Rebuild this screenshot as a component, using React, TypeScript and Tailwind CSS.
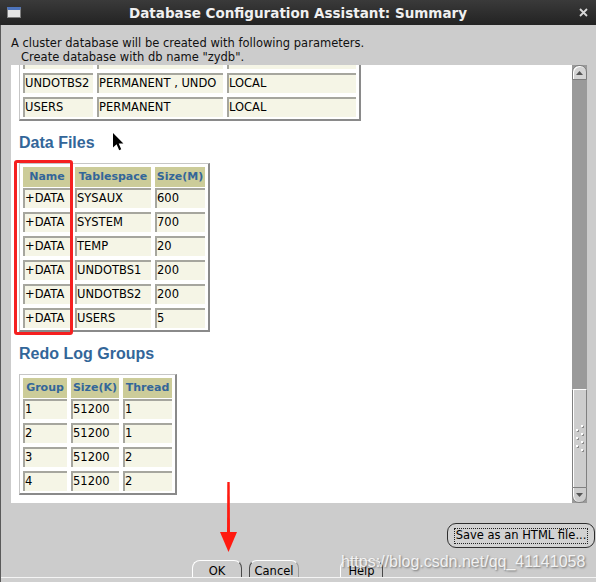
import React from 'react';

type Col = { w: string; label: string };

const tablespaceCols: Col[] = [
  { w: 'w-[70px]', label: 'Name' },
  { w: 'w-[126px]', label: 'Type' },
  { w: 'w-[129px]', label: 'Extent Management' },
];

// only the rows left in view at this scroll position
const tablespaceRows = [
  ['UNDOTBS2', 'PERMANENT , UNDO', 'LOCAL'],
  ['USERS', 'PERMANENT', 'LOCAL'],
];

const fileCols: Col[] = [
  { w: 'w-[48px]', label: 'Name' },
  { w: 'w-[76px]', label: 'Tablespace' },
  { w: 'w-[50px]', label: 'Size(M)' },
];

const fileRows = [
  ['+DATA', 'SYSAUX', '600'],
  ['+DATA', 'SYSTEM', '700'],
  ['+DATA', 'TEMP', '20'],
  ['+DATA', 'UNDOTBS1', '200'],
  ['+DATA', 'UNDOTBS2', '200'],
  ['+DATA', 'USERS', '5'],
];

const redoCols: Col[] = [
  { w: 'w-[44px]', label: 'Group' },
  { w: 'w-[48px]', label: 'Size(K)' },
  { w: 'w-[49px]', label: 'Thread' },
];

const redoRows = [
  ['1', '51200', '1'],
  ['2', '51200', '1'],
  ['3', '51200', '2'],
  ['4', '51200', '2'],
];

function Grid({ cols, rows, scrolled }: { cols: Col[]; rows: string[][]; scrolled?: boolean }) {
  return (
    <div
      className={`inline-flex flex-col border-l border-r-2 border-b-2 border-t-[#c6c6c6] border-l-[#c6c6c6] border-r-[#8a8a8a] border-b-[#8a8a8a] bg-white pl-[3px] pr-[3px] pb-[2px] ${
        scrolled ? 'border-t-0 pt-0' : 'border-t pt-[3px]'
      }`}
    >
      {scrolled ? (
        // bottom edge of the row scrolled out of view
        <div className="mb-[4px] flex gap-[4px]">
          {cols.map((c) => (
            <div key={c.label} className={`${c.w} h-[4px] border-l-2 border-[#a6a69e] bg-[#f5f5e6]`} />
          ))}
        </div>
      ) : (
        <div className="mb-[1px] flex gap-[4px]">
          {cols.map((c) => (
            <div
              key={c.label}
              className={`${c.w} flex h-[20px] items-center justify-center overflow-hidden whitespace-nowrap bg-[#cccc99] pt-[1px] text-[11px] font-bold text-[#336699]`}
            >
              {c.label}
            </div>
          ))}
        </div>
      )}
      <div className="flex flex-col gap-[4px]">
        {rows.map((r, i) => (
          <div key={i} className="flex gap-[4px]">
            {r.map((v, j) => (
              <div
                key={j}
                className={`${cols[j].w} flex h-[20px] items-center overflow-hidden whitespace-nowrap border-t-2 border-l-2 border-[#a6a69e] bg-[#f5f5e6] text-[11.5px] text-black`}
              >
                {v}
              </div>
            ))}
          </div>
        ))}
      </div>
    </div>
  );
}

function Heading({ children }: { children: React.ReactNode }) {
  return (
    <h3 className="h-[18px] font-['Liberation_Sans',Arial,sans-serif] text-[16px] leading-[18px] font-bold text-[#336699]">
      {children}
    </h3>
  );
}

function Scrollbar() {
  return (
    <div className="flex w-[15px] flex-col bg-[#9a9a9a]">
      <div className="flex h-[15px] items-center justify-center rounded-t-[7px] border border-[#7c7c7c] bg-[#d4d4d4] shadow-[inset_1px_1px_0_#ffffff]">
        <svg width="7" height="4" viewBox="0 0 7 4">
          <path d="M3.5 0L7 4H0z" fill="#555" />
        </svg>
      </div>
      <div className="flex-1" />
      {/* thumb */}
      <div className="flex h-[98px] items-center justify-center border border-b-0 border-[#808080] border-t-white bg-[#cdcdcd] shadow-[inset_1px_0_0_#ffffff]">
        <svg width="9" height="28" viewBox="0 0 9 28">
          {[
            [6, 0],
            [1, 4],
            [6, 8],
            [1, 12],
            [6, 16],
            [1, 20],
            [6, 24],
          ].map(([x, y], i) => (
            <g key={i}>
              <rect x={x + 1} y={y + 1} width="2" height="2" fill="#8c8c8c" />
              <rect x={x} y={y} width="2" height="2" fill="#ffffff" />
            </g>
          ))}
        </svg>
      </div>
      <div className="flex h-[16px] items-center justify-center rounded-b-[7px] border border-[#808080] bg-[#cdcdcd] shadow-[inset_1px_0_0_#ffffff]">
        <svg width="7" height="4" viewBox="0 0 7 4">
          <path d="M0 0H7L3.5 4z" fill="#555" />
        </svg>
      </div>
    </div>
  );
}

export default function App() {
  return (
    <div className="relative flex h-[582px] w-[596px] flex-col overflow-hidden bg-[#cccccc] font-['DejaVu_Sans',sans-serif] text-black">
      {/* title bar */}
      <div className="grid h-[25px] grid-cols-[1fr_auto_1fr] items-center bg-gradient-to-b from-[#3a3a3a] to-[#232323]">
        <div className="ml-[7px] h-[11px] w-[14px] border border-t-[3px] border-[#808080] border-t-[#4d74bd] bg-[#e6e6e6]" />
        <div className="text-[13.5px] leading-[18px] font-bold text-[#f0f0f0]">Database Configuration Assistant: Summary</div>
        <div className="mr-[8px] flex justify-end">
          <svg width="9" height="9" viewBox="0 0 9 9">
            <path d="M1 1L8 8M8 1L1 8" stroke="#d8d8d8" strokeWidth="1.8" />
          </svg>
        </div>
      </div>

      <div className="flex flex-1 flex-col border-l border-[#5a5a5a]">
        <div className="pt-[11px] text-[11.5px] leading-[14px] text-[#111]">
          <p className="pl-[10px]">A cluster database will be created with following parameters.</p>
          <p className="pl-[20px]">Create database with db name "zydb".</p>
        </div>

        <div className="mt-[1px] ml-[10px] flex h-[438px]">
          <div className="w-[561px] overflow-hidden bg-white">
            <div className="flex flex-col items-start pl-[8px]">
              <Grid cols={tablespaceCols} rows={tablespaceRows} scrolled />
              <div className="mt-[13px]">
                <Heading>Data Files</Heading>
              </div>
              <div className="relative mt-[11px]">
                <Grid cols={fileCols} rows={fileRows} />
                <div className="absolute top-[-3px] left-[-5px] h-[175px] w-[59px] rounded-[3px] border-[3px] border-[#f52020]" />
              </div>
              <div className="mt-[13px]">
                <Heading>Redo Log Groups</Heading>
              </div>
              <div className="mt-[11px]">
                <Grid cols={redoCols} rows={redoRows} />
              </div>
            </div>
          </div>
          <Scrollbar />
        </div>

        <div className="mt-[20px] flex justify-end pr-[1px]">
          <div className="flex h-[25px] w-[148px] items-center justify-center rounded-[9px] border border-[#2e2e2e] bg-[#d2d2d2]">
            <span className="flex h-[16px] w-[134px] items-center justify-center border border-dotted border-[#222] text-[11.5px] whitespace-nowrap">
              Save as an HTML file...
            </span>
          </div>
        </div>

        <div className="mt-[12px] flex h-[17px] items-start overflow-hidden pl-[191px] text-[11.5px]">
          <div className="flex h-[24px] w-[50px] items-center justify-center rounded-t-[8px] border border-t-white border-l-white border-r-[#4a4a4a] border-b-[#4a4a4a]">
            OK
          </div>
          <div className="ml-[7px] flex h-[24px] w-[50px] items-center justify-center rounded-t-[8px] border border-t-white border-l-[#4a4a4a] border-r-[#9a9a9a] border-b-[#4a4a4a]">
            Cancel
          </div>
          <div className="ml-[41px] flex h-[24px] w-[43px] items-center justify-center rounded-t-[8px] border border-t-white border-l-white border-r-[#4a4a4a] border-b-[#4a4a4a]">
            Help
          </div>
        </div>
        <div className="h-[1px] bg-[#f4f4f4]" />
        <div className="flex-1 bg-[#cfcfcf]" />
      </div>

      {/* mouse pointer */}
      <svg className="absolute top-[133px] left-[113px]" width="11" height="18" viewBox="0 0 11 18">
        <path d="M0 0V14.5L3.6 11.2L6.2 17.2L8.2 16.3L5.7 10.6H10.4Z" fill="#000" />
      </svg>

      {/* red annotation arrow */}
      <svg className="absolute top-[482px] left-[219px]" width="19" height="71" viewBox="0 0 19 71">
        <path d="M8.3 0H10.7L11 52H8Z" fill="#ff1a10" />
        <path d="M1 50L18 50L9.5 70Z" fill="#ff1a10" />
      </svg>

      {/* watermark */}
      <div className="absolute top-[553px] left-[341px] font-['Liberation_Sans',Arial,sans-serif] text-[16px] leading-[18px] whitespace-nowrap text-white/85 [text-shadow:1px_1px_2px_rgba(0,0,0,0.45)]">
        https://blog.csdn.net/qq_41141058
      </div>
    </div>
  );
}
